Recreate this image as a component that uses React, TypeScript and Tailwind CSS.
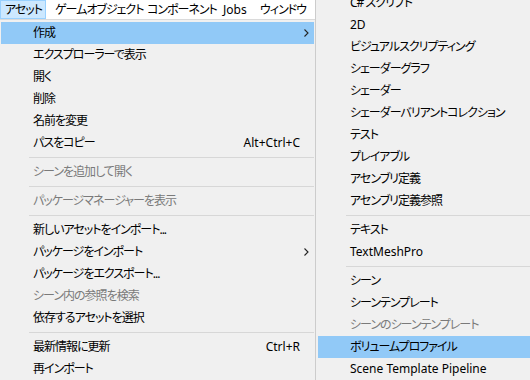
import React from "react";

type Item =
  | { sep: true }
  | { sep?: false; label: string; shortcut?: string; sub?: boolean; disabled?: boolean; active?: boolean };

const leftItems: Item[] = [
  { label: "作成", sub: true, active: true },
  { label: "エクスプローラーで表示" },
  { label: "開く" },
  { label: "削除" },
  { label: "名前を変更" },
  { label: "パスをコピー", shortcut: "Alt+Ctrl+C" },
  { sep: true },
  { label: "シーンを追加して開く", disabled: true },
  { sep: true },
  { label: "パッケージマネージャーを表示", disabled: true },
  { sep: true },
  { label: "新しいアセットをインポート..." },
  { label: "パッケージをインポート", sub: true },
  { label: "パッケージをエクスポート..." },
  { label: "シーン内の参照を検索", disabled: true },
  { label: "依存するアセットを選択" },
  { sep: true },
  { label: "最新情報に更新", shortcut: "Ctrl+R" },
  { label: "再インポート" },
];

const rightItems: Item[] = [
  { label: "C# スクリプト" },
  { label: "2D" },
  { label: "ビジュアルスクリプティング" },
  { label: "シェーダーグラフ" },
  { label: "シェーダー" },
  { label: "シェーダーバリアントコレクション" },
  { label: "テスト" },
  { label: "プレイアブル" },
  { label: "アセンブリ定義" },
  { label: "アセンブリ定義参照" },
  { sep: true },
  { label: "テキスト" },
  { label: "TextMeshPro" },
  { sep: true },
  { label: "シーン" },
  { label: "シーンテンプレート" },
  { label: "シーンのシーンテンプレート", disabled: true },
  { label: "ボリュームプロファイル", active: true },
  { label: "Scene Template Pipeline" },
];

const isLatin = (s: string) => /^[\x00-\x7F]+$/.test(s);

const Chevron = () => (
  <svg width="5" height="8" viewBox="0 0 5 8" className="absolute left-[303px] top-[7px]">
    <path d="M0.5 0.5 L4 4 L0.5 7.5" fill="none" stroke="#222" strokeWidth="1.1" />
  </svg>
);

function MenuList({ items }: { items: Item[] }) {
  return (
    <>
      {items.map((it, i) =>
        it.sep ? (
          <div key={i} className="h-[7px] flex items-center">
            <div className="h-px bg-[#d7d7d7] w-full ml-[28px]" />
          </div>
        ) : (
          <div
            key={i}
            className={`relative h-[22px] flex items-center pl-[32px] whitespace-nowrap ${
              it.active ? "bg-[#91c9f7]" : ""
            } ${it.disabled ? "text-[#7a7a7a]" : "text-black"}`}
          >
            <span className={isLatin(it.label) ? "" : "tracking-[-1px]"}>{it.label}</span>
            {it.shortcut && (
              <span className="absolute right-[14px] top-0 h-[22px] flex items-center">{it.shortcut}</span>
            )}
            {it.sub && <Chevron />}
          </div>
        )
      )}
    </>
  );
}

export default function App() {
  return (
    <div
      className="w-[530px] h-[380px] overflow-hidden flex bg-[#f0f0f0] text-[12px] leading-none [font-feature-settings:'palt']"
      style={{ fontFamily: '"Noto Sans", "Noto Sans CJK JP", sans-serif' }}
    >
      {/* main menu column */}
      <div className="w-[315px] flex flex-col">
        <div className="h-[20px] bg-white border-b border-[#dadada] flex items-stretch whitespace-nowrap">
          <div className="w-[46px] h-[19px] shrink-0 bg-[#cce8ff] border border-[#99d1ff] pl-[4px] flex items-center tracking-[-1px]">
            アセット
          </div>
          <div className="w-[96px] shrink-0 pl-[9px] flex items-center tracking-[-1px]">ゲームオブジェクト</div>
          <div className="w-[76px] shrink-0 pl-[5px] flex items-center tracking-[-1px]">コンポーネント</div>
          <div className="w-[37px] shrink-0 pl-[5px] flex items-center">Jobs</div>
          <div className="shrink-0 pl-[5px] flex items-center tracking-[-1px]">ウィンドウ</div>
        </div>
        <div className="pt-[2px] pl-[1px] pr-[1px]">
          <MenuList items={leftItems} />
        </div>
      </div>

      {/* create submenu */}
      <div className="flex-1 border-l border-[#cccccc] pl-[2px] overflow-hidden">
        <div className="-mt-[8px]">
          <MenuList items={rightItems} />
        </div>
      </div>
    </div>
  );
}
